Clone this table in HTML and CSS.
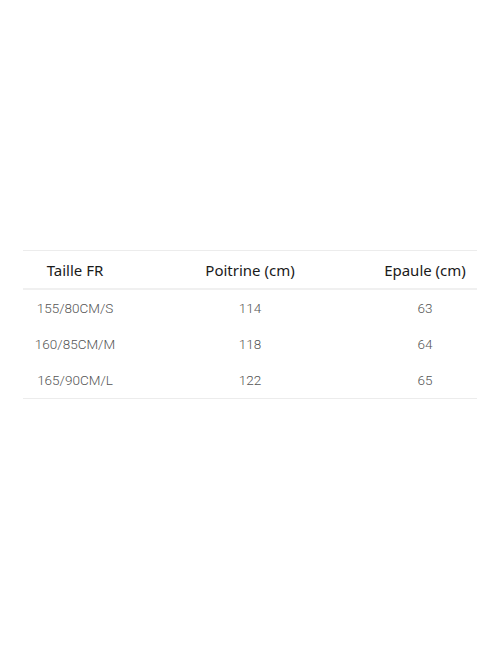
FILE: index.html
```html
<!DOCTYPE html>
<html>
<head>
<meta charset="utf-8">
<link rel="stylesheet" href="styles.css">
</head>
<body>
<div class="page">
  <div class="table">
    <div class="row head">
      <div class="cell">Taille FR</div>
      <div class="cell">Poitrine (cm)</div>
      <div class="cell">Epaule (cm)</div>
    </div>
    <div class="body">
      <div class="row">
        <div class="cell">155/80CM/S</div>
        <div class="cell">114</div>
        <div class="cell">63</div>
      </div>
      <div class="row">
        <div class="cell">160/85CM/M</div>
        <div class="cell">118</div>
        <div class="cell">64</div>
      </div>
      <div class="row">
        <div class="cell">165/90CM/L</div>
        <div class="cell">122</div>
        <div class="cell">65</div>
      </div>
    </div>
  </div>
</div>
</body>
</html>
```
FILE: styles.css
```css
html, body {
  margin: 0;
  padding: 0;
  background: #fff;
}
.page {
  width: 500px;
  height: 666px;
  padding: 250px 23px 0 23px;
  box-sizing: border-box;
}
.table {
  border-top: 1px solid #ececec;
  border-bottom: 1px solid #ececec;
}
.row {
  display: grid;
  grid-template-columns: 104px 1fr 104px;
  align-items: center;
  height: 36px;
}
.cell {
  text-align: center;
  white-space: nowrap;
}
.head {
  height: 37px;
  border-bottom: 2px solid #f0f0f0;
  font-family: "Noto Sans", "Open Sans", sans-serif;
  font-size: 15px;
  color: #1a1a1a;
}
.body .row {
  font-family: Roboto, "Noto Sans", sans-serif;
  font-size: 13.5px;
  font-weight: 300;
  color: #555;
}
```
